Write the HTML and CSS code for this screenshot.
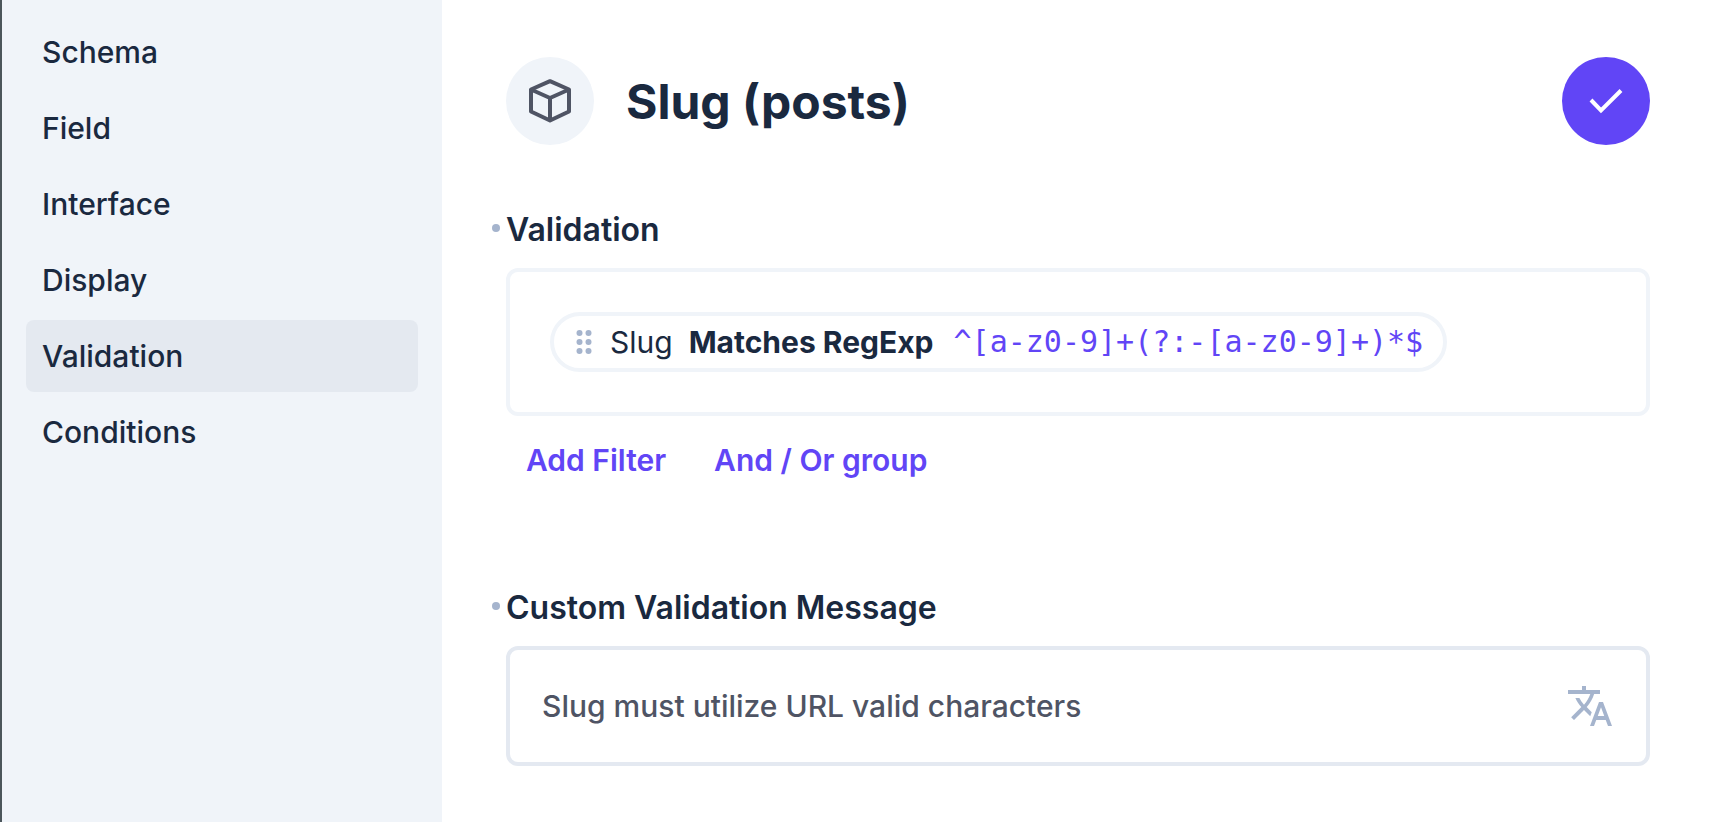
FILE: index.html
```html
<!DOCTYPE html>
<html lang="en">
<head>
<meta charset="utf-8">
<meta name="viewport" content="width=device-width, initial-scale=1">
<title>Slug (posts)</title>
<link rel="stylesheet" href="styles.css">
</head>
<body>
<div class="drawer">
  <nav class="sidebar" aria-label="Field settings">
    <a class="nav-item" href="#schema">Schema</a>
    <a class="nav-item" href="#field">Field</a>
    <a class="nav-item" href="#interface">Interface</a>
    <a class="nav-item" href="#display">Display</a>
    <a class="nav-item active" href="#validation" aria-current="page">Validation</a>
    <a class="nav-item" href="#conditions">Conditions</a>
  </nav>
  <main class="content">
    <header class="header">
      <span class="badge">
        <svg class="icon" viewBox="0 0 48 48" fill="none" stroke="currentColor" stroke-width="4" stroke-linejoin="round" aria-hidden="true"><path d="M24 4.200 43 12.500V34.500L24 43.500 5 34.500V12.500ZM5 12.500 24 21 43 12.500M24 21V43"/></svg>
      </span>
      <h1 class="title">Slug (posts)</h1>
      <button class="save" type="button" aria-label="Save">
        <svg class="icon" viewBox="0 0 48 48" fill="none" stroke="currentColor" stroke-width="4" aria-hidden="true"><path d="M9 23 19 33.500 39 13.500"/></svg>
      </button>
    </header>

    <section class="field">
      <h2 class="label">Validation</h2>
      <div class="filter-box">
        <div class="rule">
          <svg class="handle" viewBox="0 0 16 24" fill="currentColor" aria-hidden="true"><circle cx="3.500" cy="3" r="3"/><circle cx="12.500" cy="3" r="3"/><circle cx="3.500" cy="12" r="3"/><circle cx="12.500" cy="12" r="3"/><circle cx="3.500" cy="21" r="3"/><circle cx="12.500" cy="21" r="3"/></svg>
          <span class="rule-field">Slug</span>
          <button class="operator" type="button">Matches RegExp</button>
          <code class="pattern">^[a-z0-9]+(?:-[a-z0-9]+)*$</code>
        </div>
      </div>
      <div class="actions">
        <button class="action" type="button">Add Filter</button>
        <button class="action" type="button">And / Or group</button>
      </div>
    </section>

    <section class="field">
      <label class="label" for="message">Custom Validation Message</label>
      <div class="input-box">
        <input class="input" id="message" type="text" value="Slug must utilize URL valid characters">
        <button class="translate" type="button" aria-label="Translate">
          <svg class="icon" viewBox="0 0 24 24" fill="currentColor" aria-hidden="true"><path d="M12.870 15.070l-2.540-2.510.030-.030c1.740-1.940 2.980-4.170 3.710-6.530H17V4h-7V2H8v2H1v1.990h11.170C11.500 7.920 10.440 9.750 9 11.350 8.070 10.320 7.300 9.190 6.690 8h-2c.730 1.630 1.730 3.170 2.980 4.560l-5.090 5.020L4 19l5-5 3.110 3.110.760-2.040zM18.500 10h-2L12 22h2l1.120-3h4.750L21 22h2l-4.500-12zm-2.620 7l1.620-4.330L19.120 17h-3.240z"/></svg>
        </button>
      </div>
    </section>
  </main>
</div>
</body>
</html>
```
FILE: styles.css
```css
* {
  box-sizing: border-box;
}

body {
  margin: 0;
  background: #ffffff;
  color: #1a293f;
  font-family: Inter, "Liberation Sans", sans-serif;
  font-size: 30px;
  line-height: 40px;
}

button,
input {
  margin: 0;
  padding: 0;
  border: 0;
  background: none;
  color: inherit;
  font: inherit;
}

button {
  cursor: pointer;
}

.drawer {
  display: flex;
  min-height: 100vh;
  border-left: 2px solid #4c565b;
}

.sidebar {
  display: flex;
  flex: 0 0 440px;
  flex-direction: column;
  gap: 4px;
  padding: 16px 24px;
  background: #f0f4f9;
}

.nav-item {
  padding: 16px;
  border-radius: 8px;
  color: inherit;
  font-weight: 500;
  text-decoration: none;
}

.nav-item.active {
  background: #e4e9f0;
}

.content {
  flex: 1;
  min-width: 0;
  padding: 57px 64px 48px;
}

.header {
  display: flex;
  align-items: center;
  gap: 32px;
  margin-bottom: 65px;
}

.badge,
.save {
  display: flex;
  flex: none;
  align-items: center;
  justify-content: center;
  width: 88px;
  height: 88px;
  border-radius: 50%;
}

.badge {
  background: #f0f4f9;
  color: #4f5464;
}

.save {
  margin-left: auto;
  background: #6145f6;
  color: #ffffff;
}

.icon {
  display: block;
  width: 48px;
  height: 48px;
}

.title {
  margin: 0;
  padding-top: 2px;
  font-size: 48px;
  font-weight: 700;
  line-height: 64px;
}

.field + .field {
  margin-top: 108px;
}

.label {
  position: relative;
  display: block;
  width: fit-content;
  margin: 0 0 18px;
  font-size: 32px;
  font-weight: 600;
  line-height: 40px;
}

.label::before {
  position: absolute;
  top: 14px;
  left: -14px;
  width: 8px;
  height: 8px;
  border-radius: 50%;
  background: #a5b4cd;
  content: "";
}

.filter-box {
  padding: 40px;
  border: 4px solid #f0f4f9;
  border-radius: 12px;
}

.rule {
  display: flex;
  align-items: center;
  width: fit-content;
  height: 60px;
  padding: 0 20px 0 22px;
  border: 4px solid #f0f4f9;
  border-radius: 30px;
}

.handle {
  width: 16px;
  height: 24px;
  margin-right: 18px;
  color: #a5b4cd;
}

.operator {
  margin: 0 20px 0 16px;
  font-weight: 700;
}

.pattern {
  color: #6145f6;
  font-family: "DejaVu Sans Mono", monospace;
  font-size: 30px;
}

.actions {
  display: flex;
  gap: 48px;
  padding: 24px 20px 0;
}

.action {
  color: #6145f6;
  font-weight: 600;
}

.input-box {
  display: flex;
  align-items: center;
  height: 120px;
  padding: 0 32px;
  border: 4px solid #e4e9f1;
  border-radius: 12px;
}

.input {
  flex: 1;
  min-width: 0;
  outline: 0;
  color: #4f5464;
  font-weight: 500;
}

.translate {
  color: #a5b4cd;
}
```
